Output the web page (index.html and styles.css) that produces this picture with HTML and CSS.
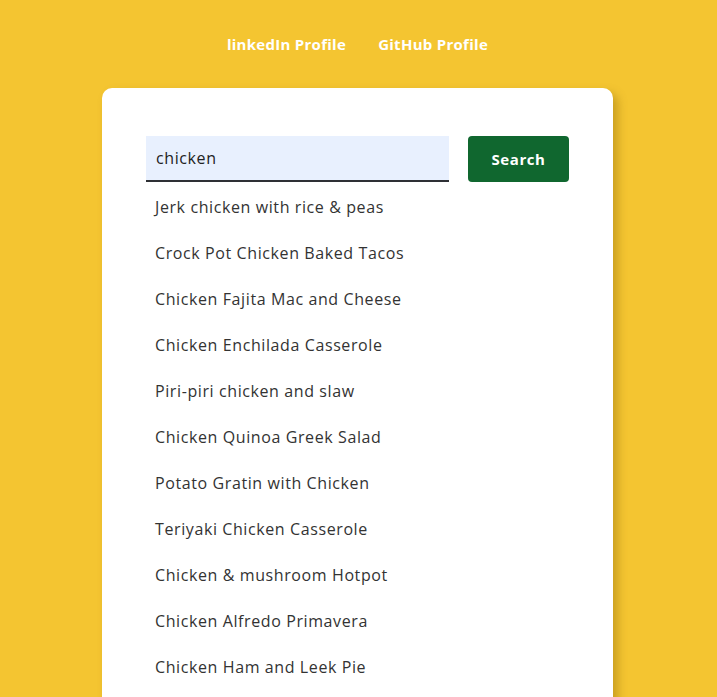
FILE: index.html
```html
<!DOCTYPE html>
<html lang="en">
<head>
<meta charset="utf-8">
<title>Recipe Search</title>
<link rel="stylesheet" href="styles.css">
</head>
<body>
<nav class="nav">
  <a class="nav-link" href="#">linkedIn Profile</a>
  <a class="nav-link" href="#">GitHub Profile</a>
</nav>
<main class="card">
  <form class="search">
    <input class="search-input" type="text" value="chicken">
    <button class="search-btn" type="button">Search</button>
  </form>
  <ul class="results">
    <li class="result">Jerk chicken with rice &amp; peas</li>
    <li class="result">Crock Pot Chicken Baked Tacos</li>
    <li class="result">Chicken Fajita Mac and Cheese</li>
    <li class="result">Chicken Enchilada Casserole</li>
    <li class="result">Piri-piri chicken and slaw</li>
    <li class="result">Chicken Quinoa Greek Salad</li>
    <li class="result">Potato Gratin with Chicken</li>
    <li class="result">Teriyaki Chicken Casserole</li>
    <li class="result">Chicken &amp; mushroom Hotpot</li>
    <li class="result">Chicken Alfredo Primavera</li>
    <li class="result">Chicken Ham and Leek Pie</li>
  </ul>
</main>
</body>
</html>
```
FILE: styles.css
```css
* { box-sizing: border-box; }
html, body {
  margin: 0;
  background: #f4c531;
  font-family: "Open Sans", "DejaVu Sans", sans-serif;
  overflow: hidden;
}
body {
  padding: 0 2px 0 0;
}
.nav {
  display: flex;
  justify-content: center;
  gap: 32px;
  padding-top: 33px;
  height: 88px;
}
.nav-link {
  color: #fff;
  text-decoration: none;
  font-weight: 700;
  font-size: 15px;
  line-height: 22px;
  letter-spacing: 0.28px;
}
.card {
  width: 511px;
  margin: 0 auto;
  background: #fff;
  border-radius: 10px;
  box-shadow: 5px 5px 10px rgba(120, 90, 0, 0.35);
  padding: 48px 44px 0;
  height: 640px;
}
.search {
  display: flex;
  gap: 19px;
  margin: 0;
}
.search-input {
  width: 303px;
  height: 46px;
  border: none;
  border-bottom: 2px solid #2e3035;
  background: #e8f0fe;
  padding: 0 10px;
  font-family: inherit;
  font-size: 16px;
  letter-spacing: 0.6px;
  color: #222;
  outline: none;
}
.search-btn {
  width: 101px;
  height: 46px;
  border: none;
  border-radius: 4px;
  background: #10672f;
  color: #fff;
  font-family: inherit;
  font-weight: 700;
  font-size: 15px;
  letter-spacing: 0.6px;
}
.results {
  list-style: none;
  margin: 2px 0 0;
  padding: 0;
}
.result {
  padding: 0 9px;
  height: 46px;
  line-height: 46px;
  font-size: 16px;
  letter-spacing: 0.6px;
  color: #333;
}
```
